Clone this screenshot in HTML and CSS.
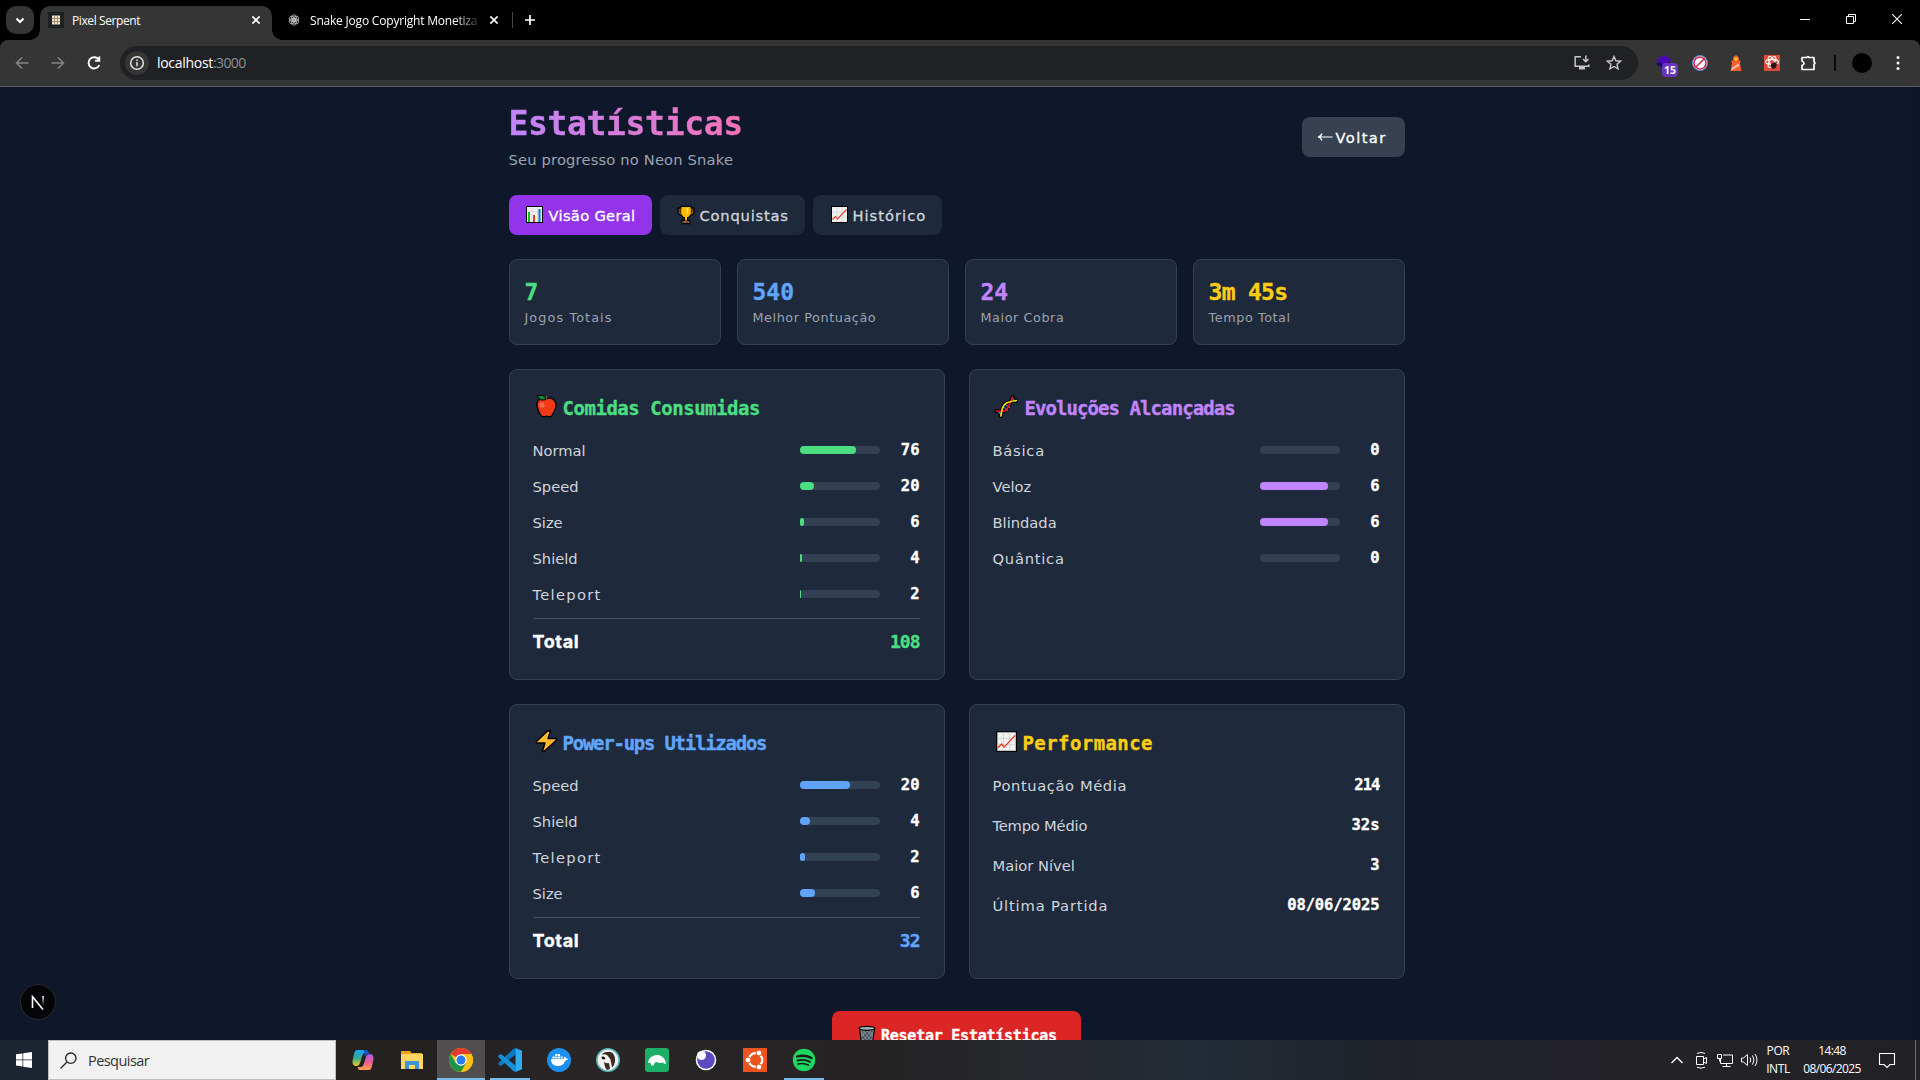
FILE: index.html
```
<!DOCTYPE html>
<html lang="pt-BR">
<head>
<meta charset="utf-8">
<title>Pixel Serpent</title>
<link rel="stylesheet" href="styles.css">
</head>
<body>
<svg class="defs" width="0" height="0">
  <symbol id="chart-bars" viewBox="0 0 20 20">
    <rect x="1.5" y="1.5" width="16" height="16" fill="#f1f1f1" stroke="#000"/>
    <path d="M7 2v15M12.5 2v15M2 6.500h15" stroke="#d6d6d6" stroke-width=".7"/>
    <path d="M3 7h2v10H3z" fill="#16c60c"/><path d="M8 10h2v7H8z" fill="#f03a17"/><path d="M13.500 4h2v13h-2z" fill="#0078d7"/>
  </symbol>
  <symbol id="chart-line" viewBox="0 0 20 20">
    <rect x="1.500" y="1.500" width="16" height="16" fill="#f1f1f1" stroke="#000"/>
    <path d="M7 2v15M12 2v15M2 7h15M2 12h15" stroke="#cfcfcf" stroke-width=".7"/>
    <path d="M2.500 14.500l3-3 2 2.500L16.500 4.500" fill="none" stroke="#f03a17" stroke-width="1.100"/>
  </symbol>
  <symbol id="win-close" viewBox="0 0 10 10"><path d="M0 0l10 10M10 0L0 10" stroke="#fff" stroke-width="1.100"/></symbol>
</svg>

<header class="tabstrip">
  <span class="tabsearch"><svg width="28" height="28" viewBox="0 0 28 28"><path d="M10.500 12.500l3.500 3.500 3.500-3.500" fill="none" stroke="#fff" stroke-width="2"/></svg></span>
  <div class="tab tab-active">
    <svg width="16" height="16" viewBox="0 0 16 16"><path fill="#1b2021" d="M0 0h16v16H0z"/><path fill="#f3e6cc" d="M4 3.500h8v9H4z"/><path d="M6.500 3v10M9.500 3v10M4 6.500h8M4 9.500h8" stroke="#8a7b62" stroke-width=".8"/></svg>
    <span class="tab-title">Pixel Serpent</span>
    <svg class="x" width="8" height="8" viewBox="0 0 10 10"><path d="M.5.500l9 9M9.500.500l-9 9" stroke="#fff" stroke-width="2"/></svg>
  </div>
  <div class="tab tab-idle">
    <svg width="12" height="12" viewBox="0 0 24 24" fill="none" stroke="#c9c9c9" stroke-width="1.600"><ellipse cx="12" cy="8" rx="5" ry="6.500"/><ellipse cx="12" cy="8" rx="5" ry="6.500" transform="rotate(60 12 12)"/><ellipse cx="12" cy="8" rx="5" ry="6.500" transform="rotate(120 12 12)"/><ellipse cx="12" cy="8" rx="5" ry="6.500" transform="rotate(180 12 12)"/><ellipse cx="12" cy="8" rx="5" ry="6.500" transform="rotate(240 12 12)"/><ellipse cx="12" cy="8" rx="5" ry="6.500" transform="rotate(300 12 12)"/></svg>
    <span class="tab-title fade">Snake Jogo Copyright Monetiza</span>
    <svg class="x" width="8" height="8" viewBox="0 0 10 10"><path d="M.5.500l9 9M9.500.500l-9 9" stroke="#fff" stroke-width="2"/></svg>
  </div>
  <span class="tab-sep"></span>
  <svg class="plus" width="10" height="10" viewBox="0 0 10 10"><path d="M5 0v10M0 5h10" stroke="#fff" stroke-width="1.700"/></svg>
  <div class="winctl">
    <svg width="10" height="10" viewBox="0 0 10 10"><path d="M0 5.500h10" stroke="#fff"/></svg>
    <svg width="10" height="10" viewBox="0 0 10 10"><path d="M.5 2.500h7v7h-7zM2.500 2.500v-2h7v7h-2" fill="none" stroke="#fff"/></svg>
    <svg width="10" height="10"><use href="#win-close"/></svg>
  </div>
</header>

<div class="toolbar">
  <div class="nav">
    <svg width="36" height="36" viewBox="0 0 36 36" fill="none" stroke="#828282" stroke-width="1.600"><path d="M24.500 18H12.500M18 12.500L12.500 18l5.500 5.500"/></svg>
    <svg width="36" height="36" viewBox="0 0 36 36" fill="none" stroke="#828282" stroke-width="1.600"><path d="M11.500 18h12M18 12.500l5.500 5.500-5.500 5.500"/></svg>
    <svg width="36" height="36" viewBox="0 0 36 36" fill="none" stroke="#fff" stroke-width="1.900"><path d="M23 15a5.600 5.600 0 1 0 .3 5M23.300 11.500v4.200h-4.200"/></svg>
  </div>
  <div class="omnibox">
    <span class="info"><svg width="16" height="16" viewBox="0 0 16 16"><circle cx="8" cy="8" r="6.300" fill="none" stroke="#e3e3e3" stroke-width="1.500"/><path d="M8 7v4.200M8 4.500v1.500" stroke="#e3e3e3" stroke-width="1.500"/></svg></span>
    <span class="url">localhost<i>:3000</i></span>
    <svg class="install" width="18" height="16" viewBox="0 0 18 16"><path d="M8 1.700H2.200v9.600h13.600V9.500M12.800.5v6M10 4l2.800 2.800L15.600 4" fill="none" stroke="#c7c7c7" stroke-width="1.500"/><path d="M6 12h6v2.500H6z" fill="#c7c7c7"/></svg>
    <svg class="star" width="16" height="16" viewBox="0 0 16 16"><path d="M8 1.500l1.900 4.300 4.700.4-3.600 3.100 1.100 4.600L8 11.500l-4.100 2.400L5 9.300 1.400 6.200l4.700-.4z" fill="none" stroke="#c7c7c7" stroke-width="1.400"/></svg>
  </div>
  <div class="exts">
    <span class="ext ext-badge"><svg width="16" height="14" viewBox="0 0 16 14"><path d="M0 9l8-5 8 5-8 5z" fill="#22006e"/><path d="M0 5l8-5 8 5-8 5z" fill="#4a0bb5"/></svg><b>15</b></span>
    <span class="ext"><svg width="16" height="16" viewBox="0 0 16 16"><circle cx="8" cy="8" r="7.500" fill="#fff" stroke="#4a8be0"/><circle cx="8" cy="8" r="6" fill="none" stroke="#d3264a" stroke-width="1.600"/><path d="M4 12l8-8" stroke="#d3264a" stroke-width="1.600"/></svg></span>
    <span class="ext"><svg width="12" height="16" viewBox="0 0 12 16"><path d="M6 0l3 2.500v3h1.500v2H9.800l1.700 8.500H.5l1.700-8.500h-.7v-2H3v-3z" fill="#f4612d"/><circle cx="6" cy="4" r="1.500" fill="#ffe11e"/><path d="M1.800 13l7-4.500.6 2L1.500 15.500z" fill="#fbb7a3"/></svg></span>
    <span class="ext"><svg width="16" height="16" viewBox="0 0 16 16"><path d="M0 0h16v16H0z" fill="#dd4b39"/><g fill="none" stroke="#fff" stroke-width="1.100"><ellipse cx="8" cy="7" rx="6.500" ry="2.600"/><ellipse cx="8" cy="7" rx="6" ry="2.500" transform="rotate(60 8 7)"/><ellipse cx="8" cy="7" rx="6" ry="2.500" transform="rotate(120 8 7)"/></g><path d="M7 9l4-2 2 2-1 4-3 1-2-2z" fill="#2b1512"/></svg></span>
    <span class="ext ext-puzzle"><svg width="18" height="18" viewBox="0 0 18 18"><path d="M2 3.500h4.800q.9-2 2.200 0h5v4.300q2 1.200 0 2.400v5.300H2v-4q4-2 0-4.400z" fill="none" stroke="#fff" stroke-width="1.700" stroke-linejoin="round"/></svg></span>
    <span class="ext-sep"></span>
    <span class="ext ext-avatar"><i></i></span>
    <span class="ext"><svg width="4" height="16" viewBox="0 0 4 16" fill="#fff"><circle cx="2" cy="2.500" r="1.500"/><circle cx="2" cy="8" r="1.500"/><circle cx="2" cy="13.500" r="1.500"/></svg></span>
  </div>
</div>

<div class="viewport">
  <main class="page">
    <div class="head">
      <div>
        <h1>Estatísticas</h1>
        <p class="sub">Seu progresso no Neon Snake</p>
      </div>
      <button class="back"><svg width="16" height="10" viewBox="0 0 16 10"><path d="M15.500 5H1.500M5 1.500Q4 4.500 1 5q3 .5 4 3.500" fill="none" stroke="#fff" stroke-width="1.200"/></svg><span>Voltar</span></button>
    </div>

    <nav class="tabs">
      <button class="pill pill-a on"><svg width="20" height="20"><use href="#chart-bars"/></svg><span>Visão Geral</span></button>
      <button class="pill pill-b"><svg width="20" height="20" viewBox="0 0 20 20"><path d="M5 1.500h10V3h3v4q-.5 3-4 3.500-1 2-2.700 2.500v2.500h2.500v3H6v-3h2.500V13Q6.700 12.500 6 10.500 2.500 10 2 7V3h3z" fill="#c27f0a" stroke="#000" stroke-width="1.400"/><path d="M5.500 2h9v6q-.7 4-4.500 4.500Q6.200 12 5.500 8zM9 12h2v3H9z" fill="#ffb900"/><path d="M3.200 4.300h1.600V9Q3.200 8 3.200 4.300zM15.200 4.300h1.600Q16.800 8 15.200 9z" fill="#1e1503"/><path d="M11.500 3v6" stroke="#ffe59b" stroke-width="1.200"/><path d="M6.500 16h7v1.800h-7z" fill="#8e562e"/></svg><span>Conquistas</span></button>
      <button class="pill pill-c"><svg width="20" height="20"><use href="#chart-line"/></svg><span>Histórico</span></button>
    </nav>

    <section class="stats">
      <article class="stat"><strong class="green">7</strong><small class="s-jogos">Jogos Totais</small></article>
      <article class="stat"><strong class="blue">540</strong><small>Melhor Pontuação</small></article>
      <article class="stat"><strong class="purple">24</strong><small>Maior Cobra</small></article>
      <article class="stat"><strong class="yellow s-tempo">3m 45s</strong><small>Tempo Total</small></article>
    </section>

    <section class="grid">
      <article class="card">
        <h2 class="green s-comidas"><svg width="24" height="24" viewBox="0 0 24 24"><path d="M12 5Q15 3 19 5q4 3 2.500 9-1.500 5-4 8-2.500 1.500-5 0-2.500 1.500-5 0-3-3-4-8Q2 8 5 6q3-2 7-1z" fill="#f03a17" stroke="#000" stroke-width="1.300"/><path d="M12.500 6.500V2" stroke="#8e562e" stroke-width="1.500"/><path d="M3 1.500h6q3 1 3 4Q6 7 4.500 4z" fill="#10893e" stroke="#000"/><circle cx="8" cy="11" r="2.600" fill="#f56b4d"/></svg>Comidas Consumidas</h2>
        <ul class="rows">
          <li><span>Normal</span><i class="bar"><b class="bg-green" style="width:56px"></b></i><em>76</em></li>
          <li><span>Speed</span><i class="bar"><b class="bg-green" style="width:14px"></b></i><em>20</em></li>
          <li><span>Size</span><i class="bar"><b class="bg-green" style="width:4px"></b></i><em>6</em></li>
          <li><span>Shield</span><i class="bar"><b class="bg-green" style="width:2px"></b></i><em>4</em></li>
          <li><span class="s-teleport">Teleport</span><i class="bar"><b class="bg-green" style="width:1px"></b></i><em>2</em></li>
        </ul>
        <div class="total"><span>Total</span><em class="green">108</em></div>
      </article>

      <article class="card">
        <h2 class="purple s-evolucoes"><svg width="24" height="24" viewBox="0 0 24 24" fill="none" stroke-linecap="round"><path d="M2.500 17Q11 18.500 13.500 14.500T18.500 3M7 22Q8 11 12.500 9T22.500 6.500M4 17l3 4M18.500 3l3.500 4" stroke="#000" stroke-width="4"/><path d="M9.500 13l4 3.500M11.500 10.500l4 3M4.500 18l3 3M18.500 4.500l3 3" stroke="#2f7fd6" stroke-width="1.300"/><path d="M2.500 17Q11 18.500 13.500 14.500T18.500 3" stroke="#e81224" stroke-width="1.700"/><path d="M7 22Q8 11 12.500 9T22.500 6.500" stroke="#fde30b" stroke-width="1.700"/></svg><span>Evoluções Alcançadas</span></h2>
        <ul class="rows">
          <li><span class="s-basica">Básica</span><i class="bar"></i><em>0</em></li>
          <li><span>Veloz</span><i class="bar"><b class="bg-purple" style="width:68px"></b></i><em>6</em></li>
          <li><span>Blindada</span><i class="bar"><b class="bg-purple" style="width:68px"></b></i><em>6</em></li>
          <li><span class="s-basica">Quântica</span><i class="bar"></i><em>0</em></li>
        </ul>
      </article>

      <article class="card">
        <h2 class="blue s-power"><svg width="24" height="24" viewBox="0 0 24 24"><path d="M13.500 2h3l-2.500 7.500h8.500v1.500L10 22.500H8.500L11 14H2.500v-1.500z" fill="#ffb92e" stroke="#000" stroke-width="1.400" stroke-linejoin="round"/></svg>Power-ups Utilizados</h2>
        <ul class="rows">
          <li><span>Speed</span><i class="bar"><b class="bg-blue" style="width:50px"></b></i><em>20</em></li>
          <li><span>Shield</span><i class="bar"><b class="bg-blue" style="width:10px"></b></i><em>4</em></li>
          <li><span class="s-teleport">Teleport</span><i class="bar"><b class="bg-blue" style="width:5px"></b></i><em>2</em></li>
          <li><span>Size</span><i class="bar"><b class="bg-blue" style="width:15px"></b></i><em>6</em></li>
        </ul>
        <div class="total"><span>Total</span><em class="blue">32</em></div>
      </article>

      <article class="card">
        <h2 class="yellow s-perf"><svg width="24" height="24" viewBox="-.7 -.7 19.500 19.500"><use href="#chart-line" width="20" height="20"/></svg>Performance</h2>
        <ul class="rows rows-wide">
          <li><span class="s-media">Pontuação Média</span><em class="s-num">214</em></li>
          <li><span class="s-medio">Tempo Médio</span><em>32s</em></li>
          <li><span>Maior Nível</span><em>3</em></li>
          <li><span class="s-ultima">Última Partida</span><em class="s-date">08/06/2025</em></li>
        </ul>
      </article>
    </section>

    <button class="reset"><svg width="20" height="20" viewBox="0 0 20 20"><path d="M2.500 3h15l-2 16h-11z" fill="#7a8790" stroke="#000" stroke-width="1.200"/><path d="M5 6l9 12M8 6l7 8M5 11l5 7M15 6L6 18M12 6l-7 8M15 11l-5 7" stroke="#39434a" stroke-width=".8"/><ellipse cx="10" cy="3.300" rx="7.900" ry="2" fill="#a5b0b6" stroke="#000" stroke-width="1.200"/></svg><span>Resetar Estatísticas</span></button>
  </main>
  <div class="scroll"></div>
  <div class="next"><svg width="34" height="34" viewBox="0 0 34 34"><defs><linearGradient id="n1" x1="0" y1="0" x2="0" y2="1"><stop offset="0" stop-color="#fff"/><stop offset="1" stop-color="#fff" stop-opacity=".05"/></linearGradient></defs><path d="M11.500 23V11.800L22 24.500" fill="none" stroke="#fff" stroke-width="1.600"/><path d="M21.300 11h1.600v9h-1.600z" fill="url(#n1)"/></svg></div>
</div>

<footer class="taskbar">
  <span class="start"><svg width="16" height="16" viewBox="0 0 16 16" fill="#fff"><path d="M0 2.300l6.500-.9v6.200H0zM7.200 1.300L16 0v7.600H7.200zM0 8.300h6.500v6.200L0 13.600zM7.200 8.300H16V16l-8.800-1.300z"/></svg></span>
  <div class="search"><svg width="17" height="17" viewBox="0 0 17 17" fill="none" stroke="#222" stroke-width="1.300"><circle cx="10.800" cy="6.200" r="5.200"/><path d="M7 10L.5 16.500"/></svg><span>Pesquisar</span></div>
  <div class="apps">
    <span class="app"><svg width="24" height="24" viewBox="0 0 24 24"><defs><linearGradient id="c1" x1="0" y1="0" x2="0" y2="1"><stop offset="0" stop-color="#1ba4ee"/><stop offset=".5" stop-color="#30a88f"/><stop offset="1" stop-color="#f2cf1d"/></linearGradient><linearGradient id="c2" x1="0" y1="0" x2="0" y2="1"><stop offset="0" stop-color="#a45bea"/><stop offset=".5" stop-color="#ec5c93"/><stop offset="1" stop-color="#ff9f4a"/></linearGradient></defs><path d="M6 2h9q2 0 2.800 3H14q-2 0-2.800 3L9 15q-1 3-3.500 3Q1 18 1.500 13L3 6q.8-4 3-4z" fill="url(#c1)"/><path d="M18 22H9q-2 0-2.500-3H10q2 0 2.800-3L15 9q1-3 3.500-3 4.500 0 4 5L21 18q-.8 4-3 4z" fill="url(#c2)"/><path d="M13 2h2q2 0 3 4-3 0-4 3z" fill="#1b4fd0"/></svg></span>
    <span class="app"><svg width="24" height="24" viewBox="0 0 24 24"><path d="M1 3h9l1.500 2H22v16H1z" fill="#e8a317"/><path d="M1 6h22v15H1z" fill="#ffd661"/><path d="M5 21v-8h14v8h-4v-4H9v4z" fill="#3d95d8"/></svg></span>
    <span class="app current"><svg width="24" height="24" viewBox="0 0 24 24"><circle cx="12" cy="12" r="12" fill="#fbc116"/><path d="M12 12L1.600 6A12 12 0 0 1 22.400 6H12z" fill="#e33b2e"/><path d="M1.600 6A12 12 0 0 0 12 24l5.200-9L12 12 6.800 15z" fill="#1e9547"/><path d="M12 24a12 12 0 0 0 10.400-18H12l5.200 9z" fill="#fbc116"/><circle cx="12" cy="12" r="5.700" fill="#fff"/><circle cx="12" cy="12" r="4.500" fill="#2d7bf0"/></svg></span>
    <span class="app open"><svg width="24" height="24" viewBox="0 0 24 24"><path d="M17.500 0v6.500L3 18 .3 16.500v-1.600L15 1.300z" fill="#0a78c0"/><path d="M17.500 24v-6.500L3 6 .3 7.500v1.600L15 22.700z" fill="#1390d8"/><path d="M17.500 0L24 2.800v18.400L17.500 24z" fill="#2aabf2"/></svg></span>
    <span class="app"><svg width="24" height="24" viewBox="0 0 24 24"><circle cx="12" cy="12" r="12" fill="#1d8fee"/><path d="M4 11h12.500q.5-2 1.500-2.500 1 1 1 2 1.500-.3 2.500.3-1 1.700-3 1.700-2 5.500-8 5.500-6.500 0-6.500-7zM5.500 8.500h2.200v2H5.500zM8.200 8.500h2.200v2H8.200zM10.900 8.500h2.200v2h-2.200zM13.600 8.500h2.200v2h-2.200zM8.200 6h2.200v2H8.200zM10.900 6h2.200v2h-2.200z" fill="#fff"/></svg></span>
    <span class="app"><svg width="24" height="24" viewBox="0 0 24 24"><circle cx="12" cy="12" r="11.200" fill="#f5f2ee" stroke="#56b3b8" stroke-width="1.600"/><path d="M6 7q1-3 5-3 4-1 6 1.500 2.500 3 2 8-.5 4-3 6l-1.500-8-3-4q-3-2-5.500-.5z" fill="#3b2b25"/><path d="M5.500 9q1.500-1 3 0l1 2-2.500.5q-1.500-.5-1.500-2.500z" fill="#111"/><path d="M8 14q3 2 5 1l1 6-3 1-2-3z" fill="#3b2b25"/></svg></span>
    <span class="app"><svg width="24" height="24" viewBox="0 0 24 24"><rect width="24" height="24" rx="3" fill="#1bae67"/><path d="M3 15q1-7 8-8 6-.5 9 5l1 3.500q-2 1-3-1l-3 .5-4-1q-2 .500-2.500 3.500H6l-.5-3z" fill="#fff"/></svg></span>
    <span class="app"><svg width="24" height="24" viewBox="0 0 24 24"><circle cx="12" cy="12" r="10.300" fill="#fff"/><circle cx="12" cy="12" r="8.800" fill="#5c4bc0"/><circle cx="7.500" cy="7.500" r="4.500" fill="#fff"/></svg></span>
    <span class="app"><svg width="24" height="24" viewBox="0 0 24 24"><path d="M0 0h24v24H0z" fill="#e95420"/><circle cx="12.500" cy="12" r="6.800" fill="none" stroke="#fff" stroke-width="2.200"/><g fill="#fff" stroke="#e95420"><circle cx="5" cy="12" r="2.900"/><circle cx="16" cy="5" r="2.900"/><circle cx="16" cy="19" r="2.900"/></g></svg></span>
    <span class="app open"><svg width="24" height="24" viewBox="0 0 24 24"><circle cx="12" cy="12" r="11.200" fill="#1ed760"/><g fill="none" stroke="#1a1a1a" stroke-linecap="round"><path d="M5 8.500q8-2 14.500 1.500" stroke-width="2.300"/><path d="M5.500 12.500q7-1.700 12.500 1.300" stroke-width="1.900"/><path d="M6 16q6-1.300 10.500 1.200" stroke-width="1.500"/></g></svg></span>
  </div>
  <div class="tray">
    <svg width="24" height="20" viewBox="0 0 24 20"><path d="M6.500 13L12 7.500l5.500 5.500" fill="none" stroke="#fff" stroke-width="1.300"/></svg>
    <svg width="24" height="20" viewBox="0 0 24 20"><path d="M7.500 6.500h7v8h-7zM14.500 9l3-1.500v6l-3-1.500M8 3.500q4-2.300 8 0M8 17.200q4 2 8 0" fill="none" stroke="#fff"/></svg>
    <svg width="24" height="20" viewBox="0 0 24 20"><path d="M10 5h9.500v8.500h-12V9M13.500 13.500v3M9.500 16.500h8M4.500 4.500h4v4h-4zM6.500 8.500v3" fill="none" stroke="#fff"/></svg>
    <svg width="24" height="20" viewBox="0 0 24 20"><path d="M4.500 8h2l4-3.500v11l-4-3.500h-2zM13 7.500q1.500 2.500 0 5M15.500 5.500q3 4.500 0 9M18 4q4 6 0 12" fill="none" stroke="#fff"/></svg>
    <div class="lang"><span>POR</span><span>INTL</span></div>
    <div class="clock"><span>14:48</span><span>08/06/2025</span></div>
    <svg class="bell" width="18" height="18" viewBox="0 0 18 18"><path d="M1.500 2.500h15v11H12l-3 3-3-3H1.500z" fill="none" stroke="#fff" stroke-width="1.100"/></svg>
    <span class="peek"></span>
  </div>
</footer>
</body>
</html>
```
FILE: styles.css
```
* { box-sizing: border-box; margin: 0; padding: 0; }
body {
  width: 1920px; height: 1080px; overflow: hidden;
  display: flex; flex-direction: column;
  background: #0f172a; color: #fff;
  font-family: "DejaVu Sans", sans-serif;
}
svg { display: block; flex: none; }
.defs { position: absolute; }
button { border: 0; color: inherit; font: inherit; }
em, i { font-style: normal; }
ul { list-style: none; }

/* browser tab strip */
.tabstrip {
  height: 48px; margin-bottom: -8px; flex: none; background: #000;
  display: flex; align-items: flex-start; padding: 6px 0 0 6px;
  font-family: "Open Sans", sans-serif; font-size: 12px;
}
.tabsearch { width: 28px; height: 28px; border-radius: 10px; background: #353535; }
.tab { display: flex; align-items: center; height: 28px; }
.tab-active {
  position: relative;
  width: 232px; height: 34px; margin-left: 6px; padding: 0 12px 6px 8px;
  background: #353535; border-radius: 10px 10px 0 0;
}
/* concave feet where the tab meets the toolbar */
.tab-active::before, .tab-active::after { content: ""; position: absolute; bottom: 0; width: 10px; height: 10px; }
.tab-active::before { left: -10px; background: radial-gradient(circle at 0 0, transparent 9.500px, #353535 10px); }
.tab-active::after { right: -10px; background: radial-gradient(circle at 100% 0, transparent 9.500px, #353535 10px); }
.tab-title { margin-left: 8px; letter-spacing: -.4px; white-space: nowrap; flex: 1; }
.tab-idle { width: 226px; padding: 0 0 0 16px; }
.tab-idle .tab-title { margin-left: 10px; flex: none; width: 168px; letter-spacing: -.2px; }
.tab-idle .x { margin-left: 12px; }
.fade { -webkit-mask-image: linear-gradient(90deg, #000 86%, transparent 103%); mask-image: linear-gradient(90deg, #000 86%, transparent 103%); }
.tab-sep { width: 1px; height: 16px; margin: 6px 0 0 14px; background: #474747; }
.plus { margin: 9px 0 0 12px; }
.winctl { margin: 8px 18px 0 auto; display: flex; gap: 36px; }

/* address toolbar */
.toolbar {
  position: relative;
  height: 47px; flex: none; display: flex; align-items: center;
  padding: 0 4px; background: #353535; border-bottom: 1px solid #5c5c5c;
  border-radius: 8px 8px 0 0;
}
.nav { display: flex; width: 116px; }
.omnibox {
  flex: 1; height: 34px; border-radius: 17px; background: #202124;
  display: flex; align-items: center; padding: 0 16px 0 5px;
  font: 14px "Open Sans", sans-serif;
}
.info { width: 24px; height: 24px; border-radius: 12px; background: #353535; display: grid; place-items: center; }
.url { margin-left: 8px; margin-top: -1px; letter-spacing: -.3px; }
.url i { color: #8d8e92; letter-spacing: -.6px; }
.install { margin-left: auto; }
.star { margin-left: 15px; }
.exts { display: flex; align-items: center; margin-left: 8px; }
.ext { position: relative; width: 36px; height: 36px; display: grid; place-items: center; }
.ext-badge svg { margin-bottom: 2px; }
.ext-badge b {
  position: absolute; left: 16px; top: 18px; width: 16px; height: 14px; border-radius: 4px;
  background: #6c35c0; font: 700 10.5px/14px "Open Sans", sans-serif; text-align: center;
}
.ext-puzzle { margin-left: 1px; }
.ext-sep { width: 2px; height: 16px; margin: 0 8px 0 7px; background: #0a0a0a; }
.ext-avatar i { width: 20px; height: 20px; border-radius: 50%; background: #000; }

/* page */
.viewport { position: relative; height: 953px; flex: none; display: flex; overflow: hidden; }
.page { width: 896px; margin: 0 auto; padding-top: 16px; font-size: 14.7px; }
.scroll { width: 7px; background: #0e1527; }
.head { display: flex; justify-content: space-between; align-items: center; height: 68px; }
h1, h2, strong, em, .reset { font-family: "DejaVu Sans Mono", monospace; font-weight: 700; -webkit-text-stroke: .35px; }
h1 {
  width: 235px; font-size: 33px; line-height: 40px; padding-top: 1px; margin-bottom: -1px; letter-spacing: -.35px; white-space: nowrap;
  background: linear-gradient(90deg, #c084fc, #f472b6); -webkit-background-clip: text; background-clip: text; color: transparent;
}
.sub { margin-top: 4px; line-height: 25px; margin-bottom: -1px; letter-spacing: .17px; color: #9ca3af; }
.back {
  width: 103px; height: 40px; border-radius: 8px; background: #374151;
  display: flex; align-items: center; gap: 3px; padding-left: 15px; font-size: 14.7px; letter-spacing: 1.4px;
}
.back span { -webkit-text-stroke: .3px #fff; }
.tabs { display: flex; gap: 8px; margin-top: 24px; }
.pill {
  height: 40px; border-radius: 8px; background: #1e293b; color: #d1d5db;
  display: flex; align-items: center; gap: 4px; padding-left: 16px; white-space: nowrap;
}
.pill span { -webkit-text-stroke: .3px; }
.pill-a { width: 143px; letter-spacing: .3px; }
.pill-b { width: 145px; letter-spacing: .8px; }
.pill-c { width: 129px; letter-spacing: 1px; padding-left: 17px; gap: 3px; }
.on { background: #9333ea; color: #fff; }
.stats { display: grid; grid-template-columns: repeat(4, 1fr); gap: 16px; margin-top: 24px; }
.stat, .card { background: #1e293b; border: 1px solid #334155; border-radius: 8px; }
.stat { height: 86px; padding: 16px 15px; }
.stat strong { display: block; font-size: 23px; line-height: 32px; letter-spacing: 0; }
.stat .s-tempo { letter-spacing: -.7px; }
.stat small { display: block; font-size: 12.8px; line-height: 20px; letter-spacing: .57px; color: #9ca3af; }
.stat .s-jogos { letter-spacing: 1.1px; }
.grid { display: grid; grid-template-columns: 1fr 1fr; gap: 24px; margin-top: 24px; }
.card { padding: 24px 24px 24px 24px; }
h2 { display: flex; align-items: center; gap: 5px; height: 28px; font-size: 19px; line-height: 28px; white-space: nowrap; }
h2 svg { margin-top: -4px; }
.s-comidas { letter-spacing: -.47px; }
.s-evolucoes { letter-spacing: -.93px; gap: 7px; }
.s-power { letter-spacing: -1.25px; }
.s-perf { letter-spacing: .42px; }
.rows { display: grid; gap: 12px; margin-top: 16px; }
.rows-wide { gap: 16px; }
.rows li { display: flex; align-items: center; height: 24px; line-height: 24px; color: #d1d5db; }
.rows li span { flex: 1; padding-top: 1px; margin-left: -1px; }
.rows em { width: 40px; text-align: right; font-size: 15.5px; color: #fff; }
.rows-wide em { width: auto; }
.rows .s-num { letter-spacing: -.9px; }
.rows .s-date { letter-spacing: -.1px; }
.bar { width: 80px; height: 8px; border-radius: 4px; background: #334155; }
.bar b { display: block; height: 8px; border-radius: 4px; }
.s-teleport { letter-spacing: 1.3px; }
.s-basica { letter-spacing: .76px; }
.s-media { letter-spacing: .6px; }
.s-medio { letter-spacing: -.2px; }
.s-ultima { letter-spacing: .84px; }
.total { display: flex; justify-content: space-between; margin-top: 12px; padding-top: 8px; border-top: 1px solid #475569; line-height: 29px; height: 37px; font-size: 18px; }
.total span { font-family: Inter, sans-serif; font-weight: 700; letter-spacing: .6px; margin-left: -1px; -webkit-text-stroke: .35px; }
.total em { letter-spacing: -1px; }
.green { color: #4ade80; } .blue { color: #60a5fa; } .purple { color: #c084fc; } .yellow { color: #facc15; }
.bg-green { background: #4ade80; } .bg-blue { background: #60a5fa; } .bg-purple { background: #c084fc; }
.reset {
  width: 249px; height: 48px; margin: 32px auto 0; border-radius: 8px; background: #dc2626;
  display: flex; align-items: center; gap: 4px; padding-left: 25px; font-size: 15px; letter-spacing: -.24px; white-space: nowrap;
}
.reset span { padding-top: 1px; }
.next {
  position: absolute; left: 20px; top: 897px; width: 36px; height: 36px; border-radius: 50%;
  background: #050507; border: 1px solid #2b2b2e;
}

/* taskbar */
.taskbar {
  height: 40px; flex: none; display: flex; align-items: stretch;
  background: linear-gradient(90deg, #1b2633 0, #1e2529 200px, #24221d 345px, #232120 430px, #272525 560px, #252323 860px, #26292e 1060px, #222b36 1200px, #1f2329 1400px, #242328 1650px, #222126 1920px);
  font-family: "Open Sans", sans-serif;
}
.start { width: 48px; display: grid; place-items: center; }
.search {
  width: 288px; background: #f1f1f1; border: 1px solid #c0c0c0; color: #333;
  display: flex; align-items: center; gap: 11px; padding-left: 11px; font-size: 14.5px; letter-spacing: -.55px;
}
.apps { display: flex; gap: 1px; margin-left: 3px; }
.app { width: 48px; height: 40px; display: flex; justify-content: center; align-items: center; }
.current { background: #504e4e linear-gradient(#76b9ed, #76b9ed) bottom / 48px 2px no-repeat; }
.open { background: linear-gradient(#76b9ed, #76b9ed) bottom / 40px 2px no-repeat; }
.tray { display: flex; align-items: center; margin-left: auto; font-size: 12px; line-height: 18px; }
.lang { width: 34px; display: grid; justify-items: center; letter-spacing: -.4px; }
.clock { width: 74px; display: grid; justify-items: center; letter-spacing: -.6px; }
.bell { margin: 0 19px 0 9px; }
.peek { width: 5px; height: 40px; border-left: 1px solid #6f6e72; }
```
